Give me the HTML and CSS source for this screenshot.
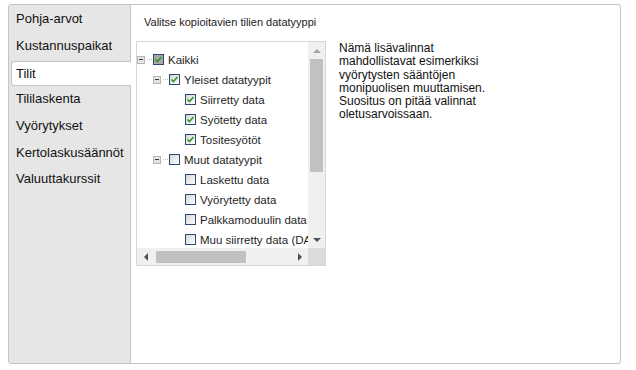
FILE: index.html
```html
<!DOCTYPE html>
<html lang="fi">
<head>
  <meta charset="UTF-8">
  <meta name="viewport" content="width=device-width, initial-scale=1.0">
  <title>Tilit</title>
  <link rel="stylesheet" href="styles.css">
</head>
<body>
  <div class="window">
    <ul class="tabs">
      <li class="tab">Pohja-arvot</li>
      <li class="tab">Kustannuspaikat</li>
      <li class="tab active">Tilit</li>
      <li class="tab">Tililaskenta</li>
      <li class="tab">Vyörytykset</li>
      <li class="tab">Kertolaskusäännöt</li>
      <li class="tab">Valuuttakurssit</li>
    </ul>

    <div class="content">
      <div class="caption">Valitse kopioitavien tilien datatyyppi</div>

      <div class="body">
        <div class="tree-box">
          <div class="tree-view">
            <ul class="tree">
              <li class="row">
                <span class="toggle"><span class="minus"></span><span class="line"></span></span>
                <span class="check dim"><svg viewBox="0 0 9 9" width="9" height="9"><polyline points="1.5,4.5 3.5,6.5 7.5,2" /></svg></span>
                <span class="label">Kaikki</span>
              </li>
              <li class="row l1">
                <span class="toggle"><span class="minus"></span><span class="line"></span></span>
                <span class="check"><svg viewBox="0 0 9 9" width="9" height="9"><polyline points="1.5,4.5 3.5,6.5 7.5,2" /></svg></span>
                <span class="label">Yleiset datatyypit</span>
              </li>
              <li class="row l2">
                <span class="toggle"></span>
                <span class="check"><svg viewBox="0 0 9 9" width="9" height="9"><polyline points="1.5,4.5 3.5,6.5 7.5,2" /></svg></span>
                <span class="label">Siirretty data</span>
              </li>
              <li class="row l2">
                <span class="toggle"></span>
                <span class="check"><svg viewBox="0 0 9 9" width="9" height="9"><polyline points="1.5,4.5 3.5,6.5 7.5,2" /></svg></span>
                <span class="label">Syötetty data</span>
              </li>
              <li class="row l2">
                <span class="toggle"></span>
                <span class="check"><svg viewBox="0 0 9 9" width="9" height="9"><polyline points="1.5,4.5 3.5,6.5 7.5,2" /></svg></span>
                <span class="label">Tositesyötöt</span>
              </li>
              <li class="row l1">
                <span class="toggle"><span class="minus"></span><span class="line"></span></span>
                <span class="check"></span>
                <span class="label">Muut datatyypit</span>
              </li>
              <li class="row l2">
                <span class="toggle"></span>
                <span class="check"></span>
                <span class="label">Laskettu data</span>
              </li>
              <li class="row l2">
                <span class="toggle"></span>
                <span class="check"></span>
                <span class="label">Vyörytetty data</span>
              </li>
              <li class="row l2">
                <span class="toggle"></span>
                <span class="check"></span>
                <span class="label">Palkkamoduulin data</span>
              </li>
              <li class="row l2">
                <span class="toggle"></span>
                <span class="check"></span>
                <span class="label">Muu siirretty data (DATA)</span>
              </li>
            </ul>
          </div>

          <div class="vscroll">
            <span class="arrow-box"><span class="arrow up"></span></span>
            <span class="vthumb"></span>
            <span class="arrow-box end"><span class="arrow down"></span></span>
          </div>
          <div class="hscroll">
            <span class="arrow-box"><span class="arrow left"></span></span>
            <span class="hthumb"></span>
            <span class="arrow-box end"><span class="arrow right"></span></span>
          </div>
          <div class="corner"></div>
        </div>

        <p class="note">Nämä lisävalinnat mahdollistavat esimerkiksi vyörytysten sääntöjen monipuolisen muuttamisen. Suositus on pitää valinnat oletusarvoissaan.</p>
      </div>
    </div>
  </div>
</body>
</html>
```

FILE: styles.css
```css
/* Kopiointiasetukset - tilit */
* {
  box-sizing: border-box;
}

body {
  margin: 0;
  font-family: "Liberation Sans", Arial, sans-serif;
  color: #111;
  background: #fff;
}

.window {
  display: flex;
  width: 613px;
  height: 360px;
  margin: 4px 0 0 8px;
  border: 1px solid #c4c4c4;
  border-radius: 3px;
  overflow: hidden;
}

/* Välilehdet */
.tabs {
  list-style: none;
  margin: 0;
  padding: 0.67px 0 0;
  width: 122px;
  flex: none;
  background: #e6e6e6;
  border-right: 1px solid #c4c4c4;
}

.tab {
  display: flex;
  align-items: center;
  height: 26.67px;
  padding-left: 7px;
  font-size: 13px;
}

.tab.active {
  height: 25px;
  margin: 1.67px -1px 0 2px;
  padding-left: 4px;
  background: #fff;
  border: 1px solid #c4c4c4;
  border-right: none;
  border-radius: 3px 0 0 3px;
}

/* Sisältö */
.content {
  flex: 1;
  padding: 11px 0 0 5px;
}

.caption {
  padding-left: 8px;
  font-size: 11px;
  line-height: 13px;
  color: #222;
}

.body {
  display: flex;
  gap: 13px;
  margin-top: 12px;
}

.tree-box {
  display: grid;
  grid-template-columns: 1fr 17px;
  grid-template-rows: 1fr 17px;
  width: 190px;
  height: 225px;
  flex: none;
  border: 1px solid #d6d6d6;
}

.tree-view {
  overflow: hidden;
}

.tree {
  list-style: none;
  margin: 0;
  padding: 7.5px 0 0;
  white-space: nowrap;
  font-size: 11.5px;
  color: #1e1e1e;
}

.row {
  display: flex;
  align-items: center;
  height: 20px;
}

.row.l1 {
  padding-left: 16px;
}

.row.l2 {
  padding-left: 32px;
}

.toggle {
  display: flex;
  align-items: center;
  width: 16px;
  flex: none;
}

.minus {
  display: flex;
  align-items: center;
  justify-content: center;
  width: 8px;
  height: 8px;
  background: #e4e4e4;
  border: 1px solid #b6b6b6;
}

.minus::before {
  content: "";
  width: 4px;
  height: 1px;
  background: #3a3a3a;
}

.line {
  flex: 1;
  margin: 0 1px 0 2px;
  border-top: 1px dotted #c0c0c0;
}

.check {
  display: flex;
  align-items: center;
  justify-content: center;
  width: 11px;
  height: 11px;
  flex: none;
  border: 1px solid #2a4a6e;
  background: linear-gradient(135deg, #d6d6d6, #fdfdfd);
}

.check.dim {
  background: #a8a8a8;
}

.check svg polyline {
  fill: none;
  stroke: #2f9a2a;
  stroke-width: 1.7;
}

.label {
  margin-left: 4px;
}

/* Vierityspalkit */
.vscroll {
  display: flex;
  flex-direction: column;
  align-items: center;
  background: #f0f0f0;
}

.hscroll {
  display: flex;
  align-items: center;
  background: #f0f0f0;
}

.corner {
  background: #dcdcdc;
}

.arrow-box {
  display: flex;
  align-items: center;
  justify-content: center;
  width: 17px;
  height: 17px;
  flex: none;
}

.arrow-box.end {
  margin-top: auto;
  margin-left: auto;
}

.vscroll .arrow-box.end {
  margin-left: 0;
}

.hscroll .arrow-box.end {
  margin-top: 0;
}

.arrow {
  width: 0;
  height: 0;
  border: 4px solid transparent;
}

.arrow.up {
  border-top: none;
  border-bottom-color: #a3a3a3;
}

.arrow.down {
  border-bottom: none;
  border-top-color: #505050;
}

.arrow.left {
  border-left: none;
  border-right-color: #505050;
}

.arrow.right {
  border-right: none;
  border-left-color: #505050;
}

.vthumb {
  width: 13px;
  height: 113px;
  background: #c1c1c1;
}

.hthumb {
  width: 90px;
  height: 12px;
  margin-left: 2px;
  background: #c1c1c1;
}

.note {
  width: 160px;
  margin: 1px 0 0;
  font-size: 12px;
  line-height: 13.3px;
  color: #111;
}
```
